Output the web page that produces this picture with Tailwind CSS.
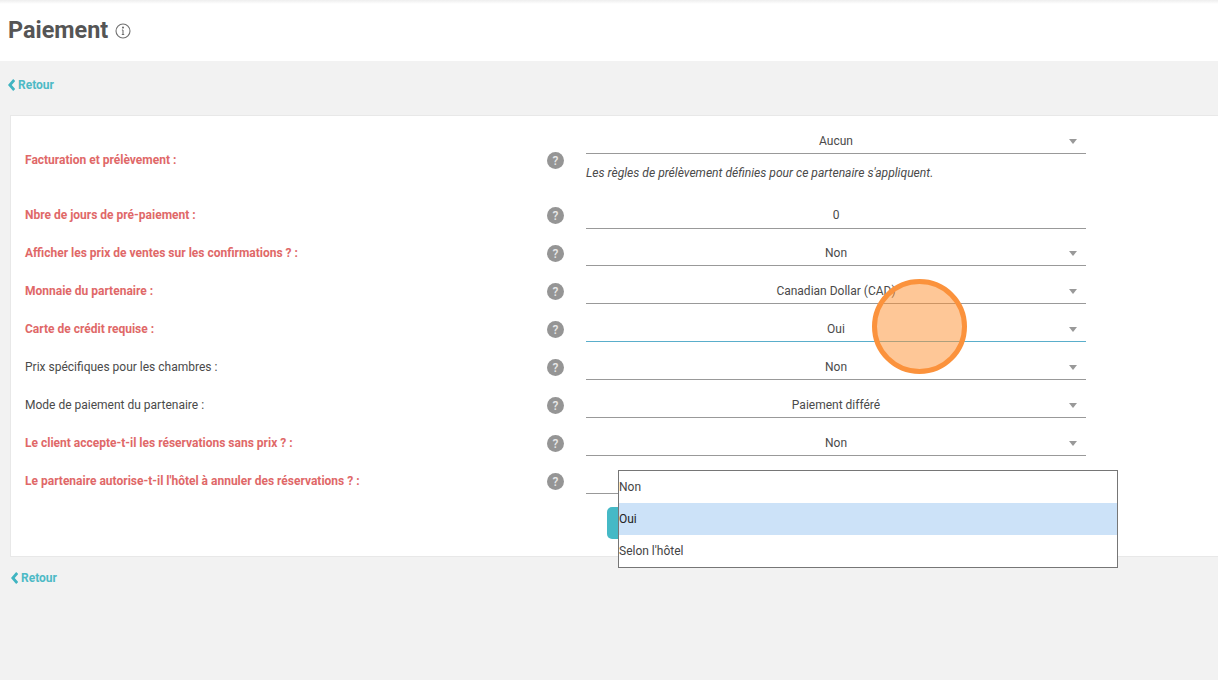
<!DOCTYPE html>
<html lang="fr">
<head>
<meta charset="utf-8">
<script src="https://cdn.jsdelivr.net/npm/@tailwindcss/browser@4"></script>
<title>Paiement</title>
</head>
<body class="relative w-[1218px] h-[680px] overflow-hidden bg-[#f2f2f2] font-['Roboto',sans-serif] text-[12px] text-[#4a4a4a]">
<header class="h-[61px] bg-white bg-gradient-to-b from-[#eeeeee] to-white to-[4px] flex items-center pl-2 gap-[7px]">
  <h1 class="text-[23.4px] leading-none font-bold text-[#555]">Paiement</h1>
  <svg class="w-[16px] h-[16px]" viewBox="0 0 16 16" fill="none" stroke="#707070" stroke-width="1.1"><circle cx="8" cy="8" r="7"/><path d="M8 7v4.4M6.8 11.5h2.4M6.9 7h1.1"/><circle cx="8" cy="4.6" r=".5" fill="#707070"/></svg>
</header>
<a class="h-[48px] pl-2 flex items-center gap-[3px] text-[#4dbac6] font-bold">
  <svg class="w-[7px] h-[12px]" viewBox="0 0 7 12" fill="none" stroke="#3fb4c1" stroke-width="2.8"><path d="M6.2 1 1.8 6 6.2 11"/></svg>
  <span>Retour</span>
</a>
<main class="ml-[10px] mt-[6px] h-[442px] bg-white border border-[#e8e8e8] border-r-0 pl-[14px] pt-[6px]">
  <div class="flex h-[69px]">
    <label class="w-[522px] pt-[31px] leading-[14px] font-bold text-[#e06868]">Facturation et prélèvement :</label>
    <div class="w-[39px] pt-[30px]"><span class="w-[17px] h-[17px] rounded-full bg-[#959595] text-[#e8e8e8] font-medium flex items-center justify-center">?</span></div>
    <div class="w-[500px]">
      <div class="relative h-[32px] border-b border-[#999] flex items-center justify-center pt-[7px]">Aucun<i class="absolute right-[9px] top-[17px] w-0 h-0 border-x-[4px] border-x-transparent border-t-[5px] border-t-[#999]"></i></div>
      <p class="mt-[12px] italic leading-[14px] text-[12.1px]">Les règles de prélèvement définies pour ce partenaire s'appliquent.</p>
    </div>
  </div>
  <div class="flex h-[38px]">
    <label class="w-[522px] pt-[17px] leading-[14px] font-bold text-[#e06868]">Nbre de jours de pré-paiement :</label>
    <div class="w-[39px] pt-[16px]"><span class="w-[17px] h-[17px] rounded-full bg-[#959595] text-[#e8e8e8] font-medium flex items-center justify-center">?</span></div>
    <div class="w-[500px] h-[38px] border-b border-[#999] flex items-center justify-center pt-[10px]">0</div>
  </div>
  <div class="flex h-[38px]">
    <label class="w-[522px] pt-[17px] leading-[14px] font-bold text-[#e06868]">Afficher les prix de ventes sur les confirmations ? :</label>
    <div class="w-[39px] pt-[16px]"><span class="w-[17px] h-[17px] rounded-full bg-[#959595] text-[#e8e8e8] font-medium flex items-center justify-center">?</span></div>
    <div class="relative w-[500px] h-[37px] border-b border-[#999] flex items-center justify-center pt-[11px]">Non<i class="absolute right-[9px] top-[22px] w-0 h-0 border-x-[4px] border-x-transparent border-t-[5px] border-t-[#999]"></i></div>
  </div>
  <div class="flex h-[38px]">
    <label class="w-[522px] pt-[17px] leading-[14px] font-bold text-[#e06868]">Monnaie du partenaire :</label>
    <div class="w-[39px] pt-[16px]"><span class="w-[17px] h-[17px] rounded-full bg-[#959595] text-[#e8e8e8] font-medium flex items-center justify-center">?</span></div>
    <div class="relative w-[500px] h-[37px] border-b border-[#999] flex items-center justify-center pt-[11px]">Canadian Dollar (CAD)<i class="absolute right-[9px] top-[22px] w-0 h-0 border-x-[4px] border-x-transparent border-t-[5px] border-t-[#999]"></i></div>
  </div>
  <div class="flex h-[38px]">
    <label class="w-[522px] pt-[17px] leading-[14px] font-bold text-[#e06868]">Carte de crédit requise :</label>
    <div class="w-[39px] pt-[16px]"><span class="w-[17px] h-[17px] rounded-full bg-[#959595] text-[#e8e8e8] font-medium flex items-center justify-center">?</span></div>
    <div class="relative w-[500px] h-[37px] border-b border-[#5aaecb] flex items-center justify-center pt-[11px]">Oui<i class="absolute right-[9px] top-[22px] w-0 h-0 border-x-[4px] border-x-transparent border-t-[5px] border-t-[#999]"></i></div>
  </div>
  <div class="flex h-[38px]">
    <label class="w-[522px] pt-[17px] leading-[14px]">Prix spécifiques pour les chambres :</label>
    <div class="w-[39px] pt-[16px]"><span class="w-[17px] h-[17px] rounded-full bg-[#959595] text-[#e8e8e8] font-medium flex items-center justify-center">?</span></div>
    <div class="relative w-[500px] h-[37px] border-b border-[#999] flex items-center justify-center pt-[11px]">Non<i class="absolute right-[9px] top-[22px] w-0 h-0 border-x-[4px] border-x-transparent border-t-[5px] border-t-[#999]"></i></div>
  </div>
  <div class="flex h-[38px]">
    <label class="w-[522px] pt-[17px] leading-[14px]">Mode de paiement du partenaire :</label>
    <div class="w-[39px] pt-[16px]"><span class="w-[17px] h-[17px] rounded-full bg-[#959595] text-[#e8e8e8] font-medium flex items-center justify-center">?</span></div>
    <div class="relative w-[500px] h-[37px] border-b border-[#999] flex items-center justify-center pt-[11px]">Paiement différé<i class="absolute right-[9px] top-[22px] w-0 h-0 border-x-[4px] border-x-transparent border-t-[5px] border-t-[#999]"></i></div>
  </div>
  <div class="flex h-[38px]">
    <label class="w-[522px] pt-[17px] leading-[14px] font-bold text-[#e06868]">Le client accepte-t-il les réservations sans prix ? :</label>
    <div class="w-[39px] pt-[16px]"><span class="w-[17px] h-[17px] rounded-full bg-[#959595] text-[#e8e8e8] font-medium flex items-center justify-center">?</span></div>
    <div class="relative w-[500px] h-[37px] border-b border-[#999] flex items-center justify-center pt-[11px]">Non<i class="absolute right-[9px] top-[22px] w-0 h-0 border-x-[4px] border-x-transparent border-t-[5px] border-t-[#999]"></i></div>
  </div>
  <div class="flex h-[38px]">
    <label class="w-[522px] pt-[17px] leading-[14px] font-bold text-[#e06868]">Le partenaire autorise-t-il l'hôtel à annuler des réservations ? :</label>
    <div class="w-[39px] pt-[16px]"><span class="w-[17px] h-[17px] rounded-full bg-[#959595] text-[#e8e8e8] font-medium flex items-center justify-center">?</span></div>
    <div class="w-[500px] h-[37px] border-b border-[#999]"></div>
  </div>
  <div class="ml-[582px] mt-[12px] w-[120px] h-[32px] rounded-[5px] bg-[#45b9c6]"></div>
</main>
<a class="h-[42px] pl-[11px] flex items-center gap-[3px] text-[#4dbac6] font-bold">
  <svg class="w-[7px] h-[12px]" viewBox="0 0 7 12" fill="none" stroke="#3fb4c1" stroke-width="2.8"><path d="M6.2 1 1.8 6 6.2 11"/></svg>
  <span>Retour</span>
</a>
<ul class="absolute left-[618px] top-[470px] w-[500px] h-[98px] bg-white border border-[#767676] text-[#444]">
  <li class="h-[32px] flex items-center">Non</li>
  <li class="h-[32px] flex items-center bg-[#cce2f8] text-[#222]">Oui</li>
  <li class="h-[32px] flex items-center">Selon l'hôtel</li>
</ul>
<div class="absolute left-[872px] top-[279px] w-[95px] h-[95px] rounded-full bg-[#fd8f2f]/50 border-[5px] border-[#fb923c]"></div>
</body>
</html>
